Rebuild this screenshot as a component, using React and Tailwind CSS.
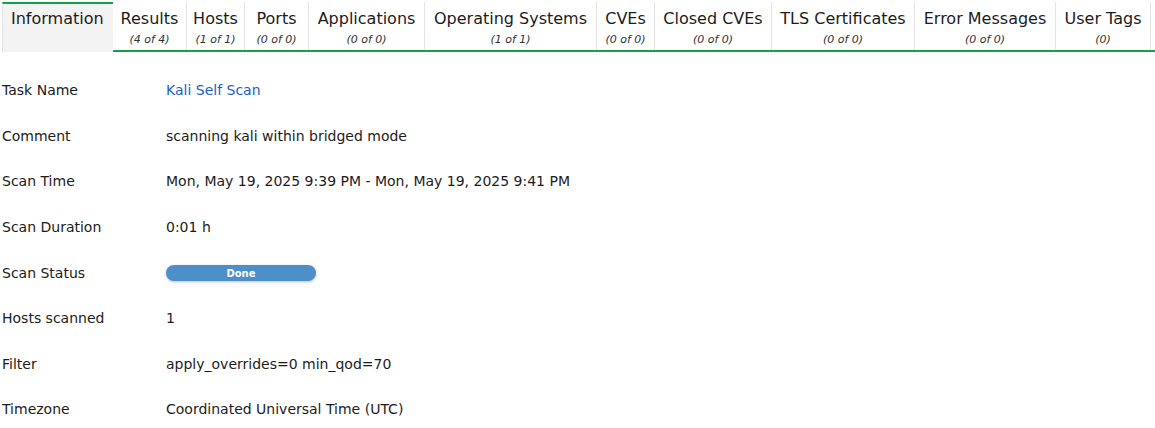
const tabs = [
  { title: "Results", sub: "(4 of 4)", w: 74 },
  { title: "Hosts", sub: "(1 of 1)", w: 58 },
  { title: "Ports", sub: "(0 of 0)", w: 64 },
  { title: "Applications", sub: "(0 of 0)", w: 116 },
  { title: "Operating Systems", sub: "(1 of 1)", w: 172 },
  { title: "CVEs", sub: "(0 of 0)", w: 58 },
  { title: "Closed CVEs", sub: "(0 of 0)", w: 117 },
  { title: "TLS Certificates", sub: "(0 of 0)", w: 143 },
  { title: "Error Messages", sub: "(0 of 0)", w: 141 },
  { title: "User Tags", sub: "(0)", w: 95 },
];

const rows = [
  ["Task Name", <span className="text-[#1a5fc8]">Kali Self Scan</span>],
  ["Comment", "scanning kali within bridged mode"],
  ["Scan Time", "Mon, May 19, 2025 9:39 PM - Mon, May 19, 2025 9:41 PM"],
  ["Scan Duration", "0:01 h"],
  [
    "Scan Status",
    <div className="w-[150px] h-4 rounded-full bg-[#4f8fc9] shadow-[0_1px_3px_rgba(0,0,0,0.25)] flex items-center justify-center text-white text-[10px] font-bold">
      Done
    </div>,
  ],
  ["Hosts scanned", "1"],
  ["Filter", "apply_overrides=0 min_qod=70"],
  ["Timezone", "Coordinated Universal Time (UTC)"],
];

export default function App() {
  return (
    <div className="w-[1155px] h-[428px] bg-white text-[#1c1c1c] font-['DejaVu_Sans',sans-serif]">
      <div className="flex pt-[2px] pl-[2px]">
        <div className="w-[111px] h-[50px] bg-[#f3f3f3] border-t-2 border-[#11a14b] border-l border-l-[#e4e4e4] pl-[8px] pt-[5px] text-[16px] leading-[20px]">
          Information
        </div>
        <div className="flex flex-1 h-[50px] border-b-2 border-[#11a14b]">
          {tabs.map((t) => (
            <div
              key={t.title}
              style={{ width: t.w }}
              className="shrink-0 flex flex-col items-center border-r border-[#e4e4e4] pt-[7px]"
            >
              <div className="text-[16px] leading-[20px]">{t.title}</div>
              <div className="text-[11px] italic leading-[13px] mt-[4px] text-[#333]">{t.sub}</div>
            </div>
          ))}
        </div>
      </div>
      <div className="pt-[16px] pl-[2px] text-[14px]">
        {rows.map(([label, value]) => (
          <div key={label} className="flex items-center h-[45.6px]">
            <div className="w-[164px]">{label}</div>
            <div>{value}</div>
          </div>
        ))}
      </div>
    </div>
  );
}
